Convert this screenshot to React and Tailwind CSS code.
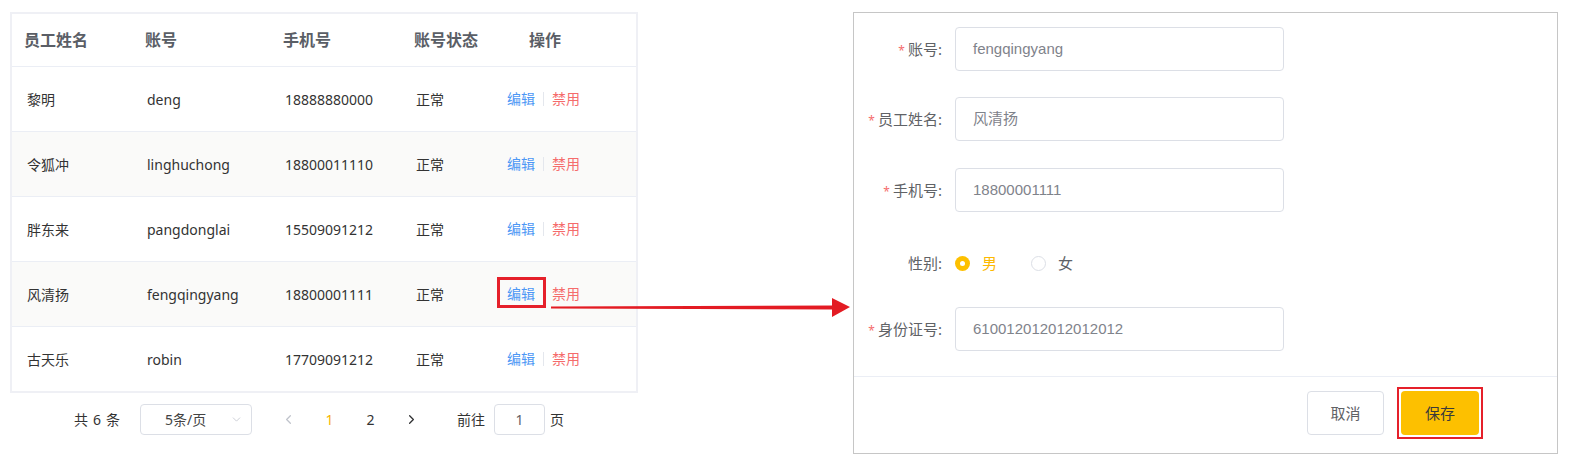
import { ChevronDown, ChevronLeft, ChevronRight } from "lucide-react";

const rows = [
  { name: "黎明", account: "deng", phone: "18888880000" },
  { name: "令狐冲", account: "linghuchong", phone: "18800011110" },
  { name: "胖东来", account: "pangdonglai", phone: "15509091212" },
  { name: "风清扬", account: "fengqingyang", phone: "18800001111", marked: true },
  { name: "古天乐", account: "robin", phone: "17709091212" },
];

const cols = "grid grid-cols-[121px_138px_131px_91px_1fr]";
const font = { fontFamily: '"Noto Sans", "Noto Sans CJK SC", sans-serif' };

function UserTable() {
  return (
    <div className="w-[628px] border-2 border-[#eff0f5] bg-white">
      <div className={`${cols} h-[53px] items-center border-b border-[#ebeef5] text-[16px] font-bold text-[#5a5e66]`}>
        <div className="pl-[12px]">员工姓名</div>
        <div className="pl-[12px]">账号</div>
        <div className="pl-[12px]">手机号</div>
        <div className="pl-[12px]">账号状态</div>
        <div className="pl-[36px]">操作</div>
      </div>
      {rows.map((r, i) => {
        const last = i === rows.length - 1;
        return (
          <div
            key={r.account}
            className={`${cols} items-center text-[14px] text-[#333] ${i % 2 === 1 ? "bg-[#fafaf9]" : "bg-white"} ${last ? "h-[64px]" : "h-[65px] border-b border-[#ebeef5]"}`}
          >
            <div className="pl-[15px]">{r.name}</div>
            <div className="pl-[14px]">{r.account}</div>
            <div className="pl-[14px]">{r.phone}</div>
            <div className="pl-[14px]">正常</div>
            <div className="flex items-center pl-[14px]">
              <span className="relative inline-block leading-[20px] text-[#4d97f5]">
                编辑
                {r.marked && (
                  <span className="absolute -left-[10px] -right-[11px] -top-[7px] -bottom-[4px] border-[3px] border-[#e5202a]" />
                )}
              </span>
              <span className="mx-[8px] h-[14px] w-px bg-[#e4e7ed]" />
              <span className="leading-[20px] text-[#f56c6c]">禁用</span>
            </div>
          </div>
        );
      })}
    </div>
  );
}

function Pager() {
  return (
    <div className="ml-[64px] mt-[11px] flex items-center text-[14px] text-[#333]">
      <span className="flex w-[48px] gap-[5px]">
        <span>共</span>
        <span>6</span>
        <span>条</span>
      </span>
      <div className="ml-[18px] flex h-[31px] w-[112px] items-center rounded-[4px] border border-[#dcdfe6] pl-[24px] pr-[8px] text-[#444]">
        <span className="flex-1">5条/页</span>
        <ChevronDown size={13} color="#c0c4cc" strokeWidth={1.5} />
      </div>
      <div className="ml-[16px] flex items-center">
        <span className="flex w-[41px] justify-center text-[#c0c4cc]">
          <ChevronLeft size={15} strokeWidth={2} />
        </span>
        <span className="flex w-[41px] justify-center text-[#f7b500]">1</span>
        <span className="flex w-[41px] justify-center">2</span>
        <span className="flex w-[41px] justify-center text-[#303133]">
          <ChevronRight size={15} strokeWidth={2} />
        </span>
      </div>
      <span className="ml-[25px]">前往</span>
      <div className="ml-[9px] flex h-[31px] w-[51px] items-center justify-center rounded-[4px] border border-[#dcdfe6] text-[#606266]">
        1
      </div>
      <span className="ml-[5px]">页</span>
    </div>
  );
}

function FormRow({ label, required, children, className = "" }) {
  return (
    <div className={`flex h-[44px] items-center ${className}`}>
      <div className="w-[88px] text-right text-[15px] text-[#606266]">
        {required && <span className="mr-[3px] text-[12px] text-[#f56c6c]">*</span>}
        {label}:
      </div>
      <div className="ml-[13px] flex items-center">{children}</div>
    </div>
  );
}

function TextInput({ value }) {
  return (
    <div
      className="flex h-[44px] w-[329px] items-center rounded-[4px] border border-[#dcdfe6] bg-white pl-[17px] text-[15px] text-[#7f838b]"
      style={{ fontFamily: '"Liberation Sans", "Noto Sans CJK SC", sans-serif' }}
    >
      {value}
    </div>
  );
}

function EditPanel() {
  return (
    <div className="ml-[215px] mt-[12px] flex h-[442px] w-[705px] flex-col border border-[#c6c6c6] bg-white">
      <div className="pt-[14px]">
        <FormRow label="账号" required>
          <TextInput value="fengqingyang" />
        </FormRow>
        <FormRow label="员工姓名" required className="mt-[26px]">
          <TextInput value="风清扬" />
        </FormRow>
        <FormRow label="手机号" required className="mt-[27px]">
          <TextInput value="18800001111" />
        </FormRow>
        <FormRow label="性别" className="mt-[29px]">
          <div className="flex items-center text-[15px]">
            <span className="flex h-[15px] w-[15px] items-center justify-center rounded-full bg-[#fdc000]">
              <span className="h-[5px] w-[5px] rounded-full bg-white" />
            </span>
            <span className="ml-[12px] text-[#fdb900]">男</span>
            <span className="ml-[34px] h-[15px] w-[15px] rounded-full border border-[#dcdfe6] bg-white" />
            <span className="ml-[12px] text-[#606266]">女</span>
          </div>
        </FormRow>
        <FormRow label="身份证号" required className="mt-[22px]">
          <TextInput value="610012012012012012" />
        </FormRow>
      </div>
      <div className="mt-[25px] border-t border-[#ebeef5]" />
      <div className="flex justify-end gap-[17px] pr-[78px] pt-[14px] text-[15px]">
        <button className="h-[44px] w-[77px] rounded-[4px] border border-[#dcdfe6] bg-white text-[#606266]">
          取消
        </button>
        <div className="relative">
          <button className="h-[44px] w-[78px] rounded-[4px] bg-[#fdc000] text-[#3a3a3a]">
            保存
          </button>
          <span className="pointer-events-none absolute -inset-[4px] border-[2.5px] border-[#e5202a]" />
        </div>
      </div>
    </div>
  );
}

export default function App() {
  return (
    <div className="relative h-[462px] w-[1569px] overflow-hidden bg-white" style={font}>
      <div className="flex items-start">
        <div className="ml-[10px] mt-[12px]">
          <UserTable />
          <Pager />
        </div>
        <EditPanel />
      </div>
      <svg className="pointer-events-none absolute left-[548px] top-[290px]" width="306" height="32">
        <polygon
          points="3,16.5 284,15.4 284,8 302,17 284,27 284,19.6 3,18.5"
          fill="#e31b23"
        />
      </svg>
    </div>
  );
}
